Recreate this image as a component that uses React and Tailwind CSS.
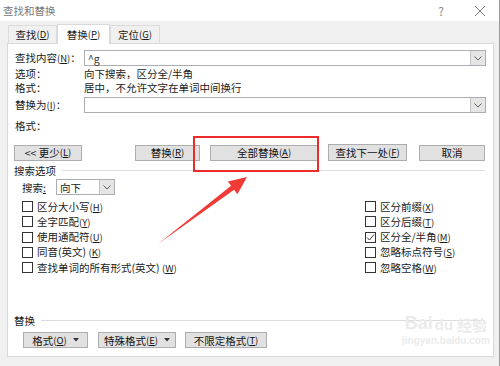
import React from 'react'

const Chevron = () => (
  <svg width="8" height="5" viewBox="0 0 8 5" className="block">
    <path d="M0.5 0.5 L4 4 L7.5 0.5" fill="none" stroke="#606060" strokeWidth="1" />
  </svg>
)

const Combo = ({ className = '', children }) => (
  <div className={`flex h-[16px] border border-[#abadb3] bg-white ${className}`}>
    <div className="flex-1 flex items-center px-[3px]">{children}</div>
    <div className="w-[15px] h-full bg-[#e5e5e5] border-l border-[#c4c4c4] flex items-center justify-center">
      <Chevron />
    </div>
  </div>
)

const Key = ({ children }) => (
  <span className="text-[9.5px]">(<u>{children}</u>)</span>
)

const Btn = ({ className = '', children }) => (
  <div
    className={`flex items-center justify-center h-[16px] bg-[#e1e1e1] border border-[#adadad] text-[#111] ${className}`}
  >
    {children}
  </div>
)

const Caret = () => (
  <svg width="6" height="4" viewBox="0 0 6 4" className="ml-[6px] block">
    <path d="M0 0 L6 0 L3 3.5 Z" fill="#333" />
  </svg>
)

const Check = ({ checked, children }) => (
  <div className="flex items-center h-[15.25px]">
    <div className="w-[11px] h-[11px] border border-[#333] bg-white mr-[4px] flex items-center justify-center">
      {checked && (
        <svg width="9" height="9" viewBox="0 0 9 9">
          <path d="M1 4.5 L3.5 7 L8 1.5" fill="none" stroke="#333" strokeWidth="1" />
        </svg>
      )}
    </div>
    <span>{children}</span>
  </div>
)

const GroupHead = ({ children }) => (
  <div className="flex items-center h-[14px] pl-[6px] pr-[8px]">
    <span>{children}</span>
    <div className="flex-1 h-px bg-[#dcdcdc] ml-[6px]" />
  </div>
)

export default function App() {
  return (
    <div className="relative w-[500px] h-[366px] overflow-hidden bg-[#f0f0f0] border-r border-[#9a9a9a] font-['Noto_Sans_CJK_SC',sans-serif] text-[10.5px] leading-[13px] text-[#1a1a1a]">
      {/* title bar */}
      <div className="h-[21px] bg-white flex items-center">
        <span className="pl-[3px] text-[#7a7a7a]">查找和替换</span>
        <span className="ml-auto text-[#8a8a8a] text-[12px] mr-[30px]">?</span>
        <svg width="12" height="12" viewBox="0 0 12 12" className="mr-[13px]">
          <path d="M1 1 L11 11 M11 1 L1 11" stroke="#7a7a7a" strokeWidth="1" />
        </svg>
      </div>

      {/* tabs */}
      <div className="h-[22px] flex items-end pl-[8px]">
        <div className="w-[49px] h-[18px] flex items-center justify-center border border-b-0 border-[#dcdcdc]">
          查找<Key>D</Key>
        </div>
        <div className="relative z-10 w-[53px] h-[20px] -mb-px flex items-center justify-center bg-white border border-b-0 border-[#d9d9d9]">
          替换<Key>P</Key>
        </div>
        <div className="w-[50px] h-[18px] flex items-center justify-center border border-b-0 border-[#dcdcdc]">
          定位<Key>G</Key>
        </div>
      </div>

      {/* panel */}
      <div className="ml-[7px] w-[487px] h-[314px] bg-white border border-[#d9d9d9] flex flex-col">
        <div className="mt-[6px] flex items-center h-[16px] pl-[7px] pr-[7px]">
          <span className="w-[69px]">查找内容<Key>N</Key>：</span>
          <Combo className="flex-1">
            <span className="text-[#333]">^g</span>
          </Combo>
        </div>
        <div className="flex items-center h-[14px] pl-[7px]">
          <span className="w-[69px]">选项：</span>
          <span>向下搜索，区分全/半角</span>
        </div>
        <div className="flex items-center h-[14px] pl-[7px]">
          <span className="w-[69px]">格式：</span>
          <span>居中，不允许文字在单词中间换行</span>
        </div>
        <div className="mt-[3px] flex items-center h-[16px] pl-[7px] pr-[7px]">
          <span className="w-[69px]">替换为<Key>I</Key>：</span>
          <Combo className="flex-1" />
        </div>
        <div className="mt-[5px] flex items-center h-[14px] pl-[7px]">
          <span>格式：</span>
        </div>

        {/* buttons */}
        <div className="mt-[12px] flex items-center h-[17px] pl-[6px]">
          <Btn className="w-[68px]">&lt;&lt; 更少<Key>L</Key></Btn>
          <Btn className="ml-[53px] w-[65px]">替换<Key>R</Key></Btn>
          <Btn className="ml-[10px] w-[108px]">全部替换<Key>A</Key></Btn>
          <Btn className="ml-[10px] w-[79px] h-[17px] border-[#0078d7]">查找下一处<Key>F</Key></Btn>
          <Btn className="ml-[12px] w-[66px]">取消</Btn>
        </div>

        <div className="mt-[2px]">
          <GroupHead>搜索选项</GroupHead>
        </div>

        <div className="mt-[2px] flex items-center h-[16px] pl-[14px]">
          <span className="w-[34px]">搜索<u>:</u></span>
          <div className="flex w-[59px] h-[16px] border border-[#abadb3] bg-white">
            <div className="flex-1 flex items-center px-[3px]">向下</div>
            <div className="w-[15px] h-full bg-[#e5e5e5] border-l border-[#c4c4c4] flex items-center justify-center">
              <Chevron />
            </div>
          </div>
        </div>

        <div className="mt-[4px] flex">
          <div className="w-[357px] pl-[14px] flex flex-col">
            <Check>区分大小写<Key>H</Key></Check>
            <Check>全字匹配<Key>Y</Key></Check>
            <Check>使用通配符<Key>U</Key></Check>
            <Check>同音(英文) <Key>K</Key></Check>
            <Check>查找单词的所有形式(英文) <Key>W</Key></Check>
          </div>
          <div className="flex flex-col">
            <Check>区分前缀<Key>X</Key></Check>
            <Check>区分后缀<Key>T</Key></Check>
            <Check checked>区分全/半角<Key>M</Key></Check>
            <Check>忽略标点符号<Key>S</Key></Check>
            <Check>忽略空格<Key>W</Key></Check>
          </div>
        </div>

        <div className="mt-auto">
          <GroupHead>替换</GroupHead>
        </div>
        <div className="mt-[5px] mb-[8px] flex items-center h-[16px] pl-[15px]">
          <Btn className="w-[65px]">格式<Key>O</Key><Caret /></Btn>
          <Btn className="ml-[10px] w-[78px]">特殊格式<Key>E</Key><Caret /></Btn>
          <Btn className="ml-[9px] w-[82px]">不限定格式<Key>T</Key></Btn>
        </div>
      </div>

      {/* annotation: red box */}
      <div className="absolute left-[193px] top-[136px] w-[126px] h-[36px] border-2 border-[#ee2b2b]" />

      {/* annotation: arrow */}
      <svg className="absolute left-0 top-0" width="500" height="366" viewBox="0 0 500 366">
        <polygon
          points="158,244 231.1,185.8 227.8,181.4 247,177 237.4,194.2 234.1,189.8"
          fill="#f23a36"
        />
      </svg>

      {/* watermark */}
      <div className="absolute left-[402px] top-[314px] flex flex-col items-center text-[#ebebeb]">
        <div className="flex items-end font-['Liberation_Sans',sans-serif] font-bold text-[18px] leading-none">
          <span>Bai</span>
          <span className="ml-[2px] text-[15px]">du</span>
          <span className="ml-[4px] font-['Noto_Sans_CJK_SC',sans-serif] text-[15px]">经验</span>
        </div>
        <span className="mt-[4px] text-[10px] leading-none font-['Liberation_Sans',sans-serif] font-bold">jingyan.baidu.com</span>
      </div>
    </div>
  )
}
